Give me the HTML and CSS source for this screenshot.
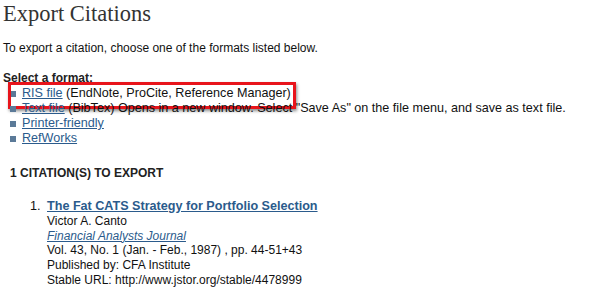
FILE: index.html
```html
<!DOCTYPE html>
<html lang="en">
<head>
    <meta charset="UTF-8">
    <title>Export Citations</title>
    <link rel="stylesheet" href="styles.css">
</head>
<body>
    <h1>Export Citations</h1>
    <p class="intro">To export a citation, choose one of the formats listed below.</p>

    <div class="formats">
        <h4>Select a format:</h4>
        <ul>
            <li class="highlight"><a href="#">RIS file</a> (EndNote, ProCite, Reference Manager)</li>
            <li><a href="#">Text file</a> (BibTex) Opens in a new window. Select "Save As" on the file menu, and save as text file.</li>
            <li><a href="#">Printer-friendly</a></li>
            <li><a href="#">RefWorks</a></li>
        </ul>
    </div>

    <h5>1 CITATION(S) TO EXPORT</h5>

    <div class="citation">
        <span class="num">1.</span>
        <div class="details">
            <a href="#" class="cite-title">The Fat CATS Strategy for Portfolio Selection</a>
            <div>Victor A. Canto</div>
            <div><a href="#" class="journal">Financial Analysts Journal</a></div>
            <div>Vol. 43, No. 1 (Jan. - Feb., 1987) , pp. 44-51+43</div>
            <div>Published by: CFA Institute</div>
            <div>Stable URL: http://www.jstor.org/stable/4478999</div>
        </div>
    </div>
</body>
</html>
```

FILE: styles.css
```css
* {
    box-sizing: border-box;
    margin: 0;
    padding: 0;
}

body {
    font-family: 'Liberation Sans', Arial, sans-serif;
    font-size: 12px;
    color: #111;
    background: #fff;
    padding: 0 3px;
}

a {
    color: #2b5b8c;
}

h1 {
    font-family: 'Liberation Serif', Georgia, serif;
    font-weight: normal;
    font-size: 22.5px;
    color: #333;
    line-height: 26px;
    margin-top: 1px;
}

.intro {
    margin-top: 14px;
    line-height: 15px;
}

.formats {
    margin-top: 15px;
}

h4 {
    font-size: 12px;
    line-height: 15px;
    color: #222;
}

ul {
    list-style: none;
    font-size: 12.6px;
    line-height: 15px;
}

ul li {
    position: relative;
    padding-left: 19px;
}

ul li:before {
    content: '';
    position: absolute;
    left: 7px;
    top: 5px;
    width: 6px;
    height: 6px;
    background: #5b7a98;
}

/* red box drawn over the first format */
.highlight:after {
    content: '';
    position: absolute;
    left: 5px;
    top: -4px;
    width: 282px;
    height: 21px;
    border: 3px solid #e8141b;
    box-shadow: 1px 2px 3px rgba(0, 0, 0, 0.45);
}

h5 {
    font-size: 12px;
    line-height: 15px;
    margin-top: 20px;
    padding-left: 7px;
    color: #222;
}

.citation {
    display: flex;
    margin-top: 18px;
    padding-left: 27px;
    line-height: 14.8px;
}

.num {
    width: 17px;
    font-size: 12.6px;
}

.cite-title {
    font-weight: bold;
    font-size: 12.6px;
}

.journal {
    font-style: italic;
}
```
